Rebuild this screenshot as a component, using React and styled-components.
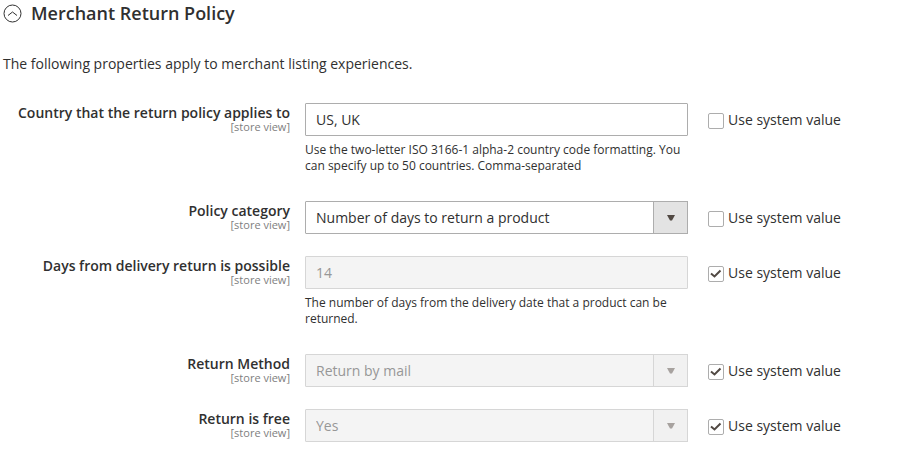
import React, { useId } from "react";
import styled, { createGlobalStyle } from "styled-components";

const Global = createGlobalStyle`
  * { box-sizing: border-box; }
  body { margin: 0; background: #fff; color: #303030; font-family: "Open Sans", "Helvetica Neue", sans-serif; font-size: 14px; line-height: 19px; }
`;
const Section = styled.section`padding: 0 5px 0 3px;`;
const Header = styled.button`
  display: flex; align-items: center; gap: 9px; padding: 0; border: 0; background: none;
  color: #303030; font: 600 18px/26px "Open Sans", sans-serif; cursor: pointer;
`;
const Intro = styled.p`margin: 28px 0 29px; font-size: 14px; line-height: 20px;`;
const Fields = styled.div`display: grid; gap: 22px;`;
const Row = styled.div`
  display: grid; grid-template-columns: 287fr 383fr 195fr; column-gap: 15px; align-items: start;
`;
const LabelCell = styled.div`
  display: flex; flex-direction: column; align-items: flex-end; padding-top: 1px; text-align: right;
`;
const Label = styled.label`font-weight: 600; line-height: 18px;`;
const Scope = styled.span`font-size: 11px; line-height: 10px; color: #808080;`;
const control = `
  display: block; width: 100%; height: 33px; padding: 0 10px; border: 1px solid #adadad; border-radius: 1px;
  background: #fff; color: #303030; font: 400 14px/20px "Open Sans", sans-serif; appearance: none; opacity: 1;
  &:disabled { background: #f4f4f4; color: #979797; border-color: #d6d6d6; }
`;
const TextInput = styled.input`${control}`;
const SelectBox = styled.div`
  display: grid;
  > * { grid-area: 1 / 1; }
`;
const Select = styled.select`${control}`;
const Arrow = styled.span`
  justify-self: end; display: flex; align-items: center; justify-content: center; width: 35px; height: 33px;
  border: 1px solid ${(p) => (p.$disabled ? "#d6d6d6" : "#adadad")};
  background: ${(p) => (p.$disabled ? "#f1f1f1" : "#e3e3e3")};
  color: ${(p) => (p.$disabled ? "#a7a29f" : "#514943")};
  pointer-events: none; z-index: 1;
`;
const Note = styled.p`margin: 6px 0 5px; font-size: 12px; line-height: 16px;`;
const Check = styled.label`display: flex; align-items: center; gap: 4px; height: 33px; padding-left: 5px;`;
const Box = styled.span`
  display: grid; width: 16px; height: 16px; margin-top: 2px;
  > * { grid-area: 1 / 1; }
`;
const CheckInput = styled.input`
  appearance: none; width: 16px; height: 16px; margin: 0; border: 1px solid #adadad; border-radius: 2px; background: #fff;
  &:not(:checked) + svg { display: none; }
`;

const SystemValue = ({ checked }) => (
  <Check>
    <Box>
      <CheckInput type="checkbox" defaultChecked={checked} />
      <svg width="16" height="16" viewBox="0 0 16 16" fill="none" aria-hidden="true" pointerEvents="none">
        <path d="M3 7.500l3.500 3 6-6" stroke="#514943" strokeWidth="2" />
      </svg>
    </Box>
    Use system value
  </Check>
);

const Field = ({ label, value, select, disabled, note }) => {
  const id = useId();
  return (
    <Row>
      <LabelCell>
        <Label htmlFor={id}>{label}</Label>
        <Scope>[store view]</Scope>
      </LabelCell>
      <div>
        {select ? (
          <SelectBox>
            <Select id={id} disabled={disabled}><option>{value}</option></Select>
            <Arrow $disabled={disabled}>
              <svg width="8" height="6" viewBox="0 0 8 6" aria-hidden="true"><path d="M0 0h8L5 5.500H3z" fill="currentColor" /></svg>
            </Arrow>
          </SelectBox>
        ) : (
          <TextInput id={id} defaultValue={value} disabled={disabled} />
        )}
        {note && <Note>{note}</Note>}
      </div>
      <SystemValue checked={disabled} />
    </Row>
  );
};

export default function App() {
  return (
    <Section>
      <Global />
      <Header type="button" aria-expanded="true">
        <svg width="19" height="19" viewBox="0 0 19 19" fill="none" stroke="#303030" aria-hidden="true">
          <circle cx="9.5" cy="9.5" r="8.5" /><path d="M5 11.500l4.500-3.500 4.500 3.500" />
        </svg>
        Merchant Return Policy
      </Header>
      <Intro>The following properties apply to merchant listing experiences.</Intro>
      <Fields>
        <Field label="Country that the return policy applies to" value="US, UK" note="Use the two-letter ISO 3166-1 alpha-2 country code formatting. You can specify up to 50 countries. Comma-separated" />
        <Field label="Policy category" value="Number of days to return a product" select />
        <Field label="Days from delivery return is possible" value="14" disabled note="The number of days from the delivery date that a product can be returned." />
        <Field label="Return Method" value="Return by mail" select disabled />
        <Field label="Return is free" value="Yes" select disabled />
      </Fields>
    </Section>
  );
}
